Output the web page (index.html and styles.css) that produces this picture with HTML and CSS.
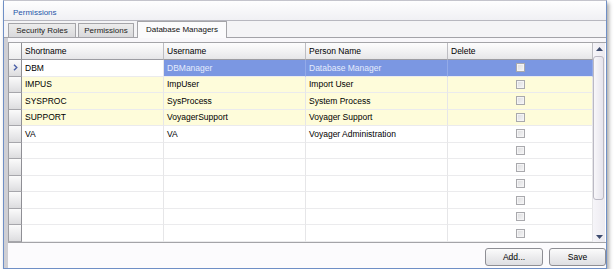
FILE: index.html
```html
<!DOCTYPE html>
<html>
<head>
<meta charset="utf-8">
<link rel="stylesheet" href="styles.css">
</head>
<body>
<div class="window">
  <div class="titlebar">Permissions</div>
  <div class="tabstrip">
    <div class="tab t1">Security Roles</div>
    <div class="tab t2">Permissions</div>
    <div class="tab active">Database Managers</div>
  </div>
  <div class="body">
    <div class="panel">
      <div class="grid">
        <div class="table">
          <div class="row head">
            <div class="rh"></div>
            <div class="c">Shortname</div>
            <div class="c">Username</div>
            <div class="c">Person Name</div>
            <div class="c">Delete</div>
          </div>
          <div class="row sel">
            <div class="rh"><svg class="arrow" width="5" height="7" viewBox="0 0 5 7"><path d="M1 0.8 L3.8 3.5 L1 6.2" fill="none" stroke="#4a5fa6" stroke-width="1.4"/></svg></div>
            <div class="c cur">DBM</div>
            <div class="c">DBManager</div>
            <div class="c">Database Manager</div>
            <div class="c cb"><span class="box"></span></div>
          </div>
          <div class="row yel">
            <div class="rh"></div>
            <div class="c">IMPUS</div>
            <div class="c">ImpUser</div>
            <div class="c">Import User</div>
            <div class="c cb"><span class="box"></span></div>
          </div>
          <div class="row yel">
            <div class="rh"></div>
            <div class="c">SYSPROC</div>
            <div class="c">SysProcess</div>
            <div class="c">System Process</div>
            <div class="c cb"><span class="box"></span></div>
          </div>
          <div class="row yel">
            <div class="rh"></div>
            <div class="c">SUPPORT</div>
            <div class="c">VoyagerSupport</div>
            <div class="c">Voyager Support</div>
            <div class="c cb"><span class="box"></span></div>
          </div>
          <div class="row">
            <div class="rh"></div>
            <div class="c">VA</div>
            <div class="c">VA</div>
            <div class="c">Voyager Administration</div>
            <div class="c cb"><span class="box"></span></div>
          </div>
          <div class="row"><div class="rh"></div><div class="c"></div><div class="c"></div><div class="c"></div><div class="c cb"><span class="box"></span></div></div>
          <div class="row"><div class="rh"></div><div class="c"></div><div class="c"></div><div class="c"></div><div class="c cb"><span class="box"></span></div></div>
          <div class="row"><div class="rh"></div><div class="c"></div><div class="c"></div><div class="c"></div><div class="c cb"><span class="box"></span></div></div>
          <div class="row"><div class="rh"></div><div class="c"></div><div class="c"></div><div class="c"></div><div class="c cb"><span class="box"></span></div></div>
          <div class="row"><div class="rh"></div><div class="c"></div><div class="c"></div><div class="c"></div><div class="c cb"><span class="box"></span></div></div>
          <div class="row"><div class="rh"></div><div class="c"></div><div class="c"></div><div class="c"></div><div class="c cb"><span class="box"></span></div></div>
        </div>
        <div class="scrollbar">
          <div class="sbtn"><svg width="7" height="4" viewBox="0 0 7 4"><path d="M0 4 L3.5 0 L7 4 Z" fill="#3d4b6e"/></svg></div>
          <div class="thumb"></div>
          <div class="track"></div>
          <div class="sbtn"><svg width="7" height="4" viewBox="0 0 7 4"><path d="M0 0 L3.5 4 L7 0 Z" fill="#3d4b6e"/></svg></div>
        </div>
      </div>
    </div>
    <div class="footer">
      <button class="btn add">Add...</button>
      <button class="btn save">Save</button>
    </div>
  </div>
</div>
</body>
</html>
```
FILE: styles.css
```css
html, body {
  margin: 0;
  padding: 0;
  background: #ffffff;
}
body {
  font-family: "Liberation Sans", Arial, sans-serif;
  font-size: 8.5px;
  color: #000;
}
.window {
  box-sizing: border-box;
  width: 604px;
  height: 269px;
  margin-left: 3px;
  border: 1px solid #6f8fc6;
  border-top-color: #c4c4cc;
  background: #f6f5f8;
  box-shadow: 2px 3px 4px rgba(0, 0, 0, 0.35);
  display: flex;
  flex-direction: column;
}
.titlebar {
  box-sizing: border-box;
  height: 20px;
  padding: 7px 0 0 9px;
  font-size: 8px;
  line-height: 9px;
  color: #1f55a8;
  background: linear-gradient(#fefefe, #f0f0f4);
  border-bottom: 1px solid #b7b7bf;
}
.tabstrip {
  box-sizing: border-box;
  height: 17px;
  display: flex;
  align-items: flex-end;
  padding-left: 4px;
  border-bottom: 1px solid #a3a3a8;
  background: #f4f4f6;
}
.tab {
  box-sizing: border-box;
  height: 14px;
  margin-right: 2px;
  border: 1px solid #a4a4a8;
  border-bottom: none;
  background: linear-gradient(#ececec, #d9d9db);
  font-size: 8px;
  color: #222;
  text-align: center;
  line-height: 13px;
  border-radius: 1px 1px 0 0;
}
.t1 { width: 68px; }
.t2 { width: 56px; }
.tab.active {
  width: 90px;
  height: 17px;
  margin-bottom: -1px;
  margin-left: 1px;
  background: #fbfbfc;
  line-height: 15px;
  color: #111;
}
.body {
  flex: 1;
  display: flex;
  flex-direction: column;
  border-left: 4px solid #cfcfd4;
}
.panel {
  padding-top: 4px;
  background: #f8f7fa;
}
.grid {
  display: flex;
  height: 201px;
  background: #ffffff;
  border-top: 1px solid #a4a4a8;
  border-bottom: 1px solid #a4a4a8;
  box-sizing: border-box;
}
.table {
  width: 585px;
  display: flex;
  flex-direction: column;
}
.row {
  display: grid;
  grid-template-columns: 14px 142px 142px 142px 145px;
  height: 16.6px;
}
.row.head {
  height: 17px;
}
.c {
  box-sizing: border-box;
  border-right: 1px solid #e6e6e8;
  border-bottom: 1px solid #ebebed;
  padding-left: 3px;
  display: flex;
  align-items: center;
  white-space: nowrap;
  overflow: hidden;
}
.rh {
  box-sizing: border-box;
  border-left: 1px solid #9d9da2;
  border-right: 1px solid #8f8f95;
  border-bottom: 1px solid #a6a6ab;
  background: linear-gradient(#fbfbfb, #e6e6e8 70%, #dcdcde);
  display: flex;
  align-items: center;
  justify-content: center;
}
.head .c {
  background: linear-gradient(#fdfdfd, #f1f1f2 55%, #e6e6e8);
  border-right: 1px solid #bdbdc2;
  border-bottom: 1px solid #9c9ca2;
}
.head .rh {
  background: linear-gradient(#fdfdfd, #ededee);
  border-bottom: 1px solid #9c9ca2;
}
.yel .c {
  background: #fefcda;
}
.sel .c {
  background: #7b97e2;
  color: #e4ebfc;
  border-right-color: #93aae8;
}
.sel .c.cur {
  background: #ffffff;
  color: #000;
  border-right-color: #e6e6e8;
}
.cb {
  justify-content: center;
  padding-left: 0;
}
.box {
  box-sizing: border-box;
  width: 9px;
  height: 9px;
  border: 1px solid #a9a9ad;
  background: linear-gradient(135deg, #dcdcde, #f6f6f7);
  box-shadow: inset 0 0 0 1px #f4f4f5;
}
.arrow {
  display: block;
}
.scrollbar {
  width: 12px;
  display: flex;
  flex-direction: column;
  background: linear-gradient(90deg, #f6f5f9, #eceaf0);
}
.sbtn {
  height: 11px;
  display: flex;
  align-items: center;
  justify-content: center;
}
.thumb {
  box-sizing: border-box;
  height: 144px;
  margin: 2px 1px 0 0;
  border: 1px solid #bbb9c4;
  border-radius: 3px;
  background: linear-gradient(90deg, #f8f7fa, #e6e4ec);
}
.track {
  flex: 1;
}
.footer {
  flex: 1;
  display: flex;
  justify-content: flex-end;
  align-items: flex-start;
  padding-top: 5px;
  gap: 6px;
  background: #fcfbfd;
}
.btn {
  box-sizing: border-box;
  height: 18px;
  margin: 0;
  padding: 0;
  border: 1px solid #8e8e94;
  border-radius: 3px;
  background: linear-gradient(#fbfbfb, #ececee 50%, #dedee2);
  font-family: "Liberation Sans", Arial, sans-serif;
  font-size: 8.5px;
  color: #000;
}
.add { width: 58px; }
.save { width: 57px; }
```
